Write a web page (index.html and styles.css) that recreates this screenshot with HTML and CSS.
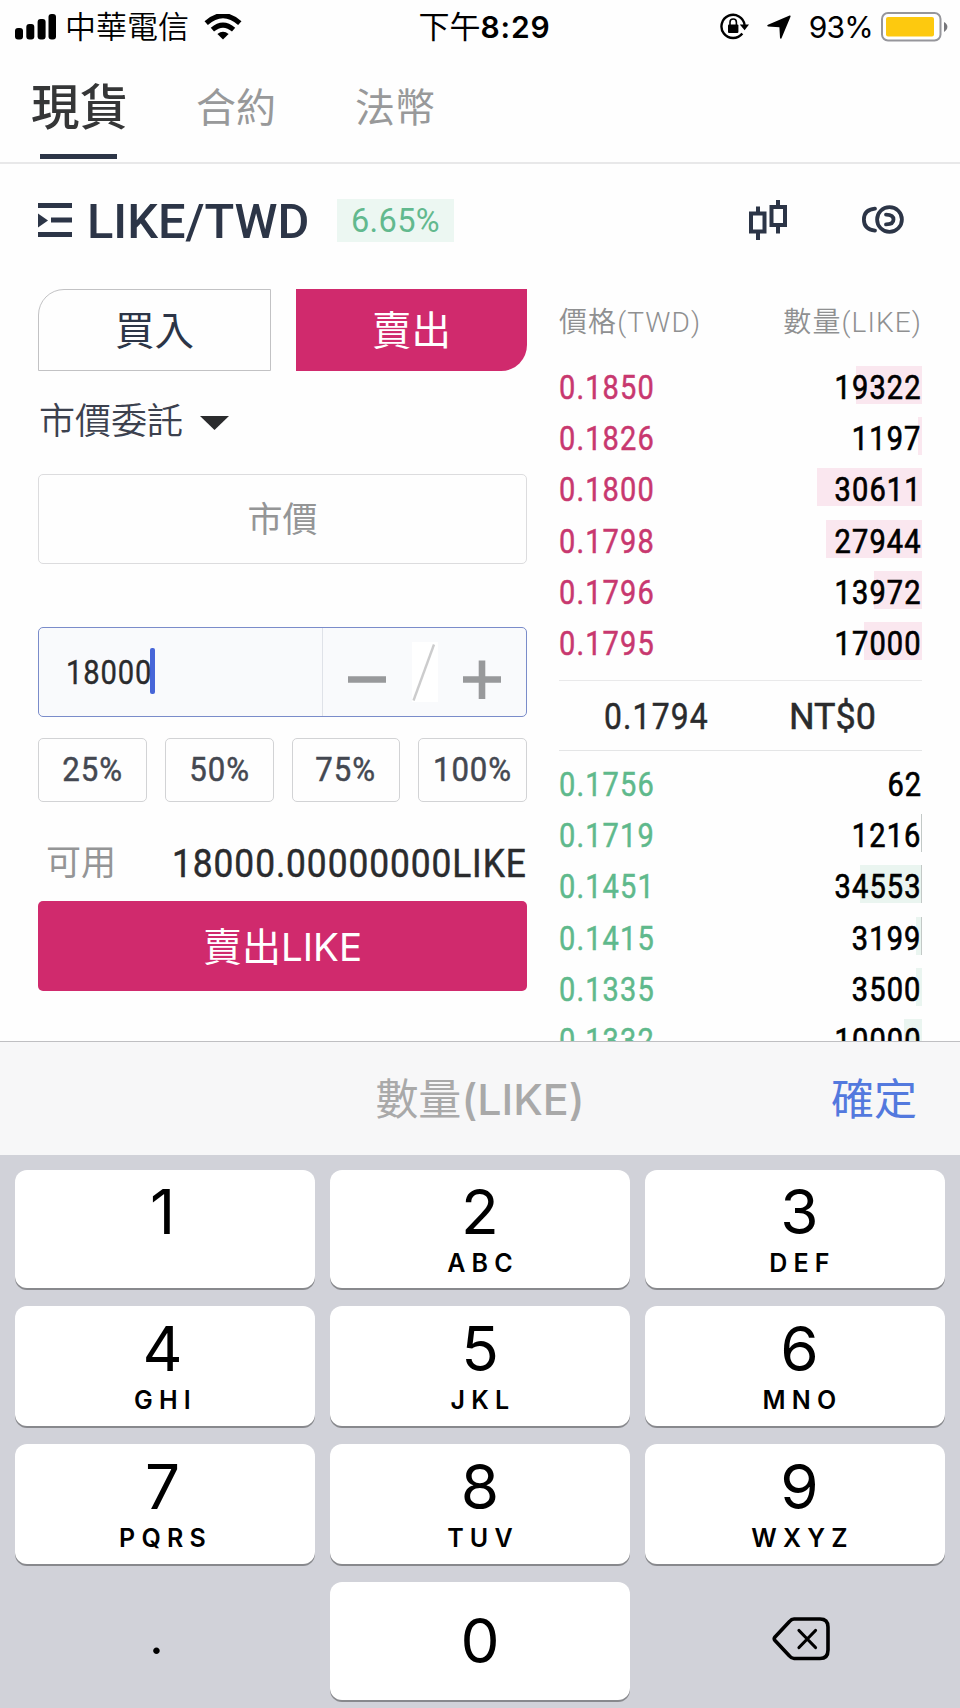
FILE: index.html
```
<!DOCTYPE html>
<html lang="zh-Hant">

<head>
    <meta charset="UTF-8">
    <meta name="viewport" content="width=device-width, initial-scale=1.0">
    <title>LIKE/TWD</title>
    <link rel="stylesheet" href="styles.css">
</head>

<body>
    <div class="app">
        <header class="status-bar">
            <div class="status-left">
                <svg class="signal" width="41" height="26" viewBox="0 0 41 26">
                    <rect x="0" y="14" width="8" height="11.5" rx="3" />
                    <rect x="11.3" y="10" width="8" height="15.5" rx="3" />
                    <rect x="22.6" y="5" width="8" height="20.5" rx="3" />
                    <rect x="33.5" y="0" width="7.5" height="25.5" rx="3" />
                </svg>
                <span class="carrier">中華電信</span>
                <svg class="wifi" width="38" height="26" viewBox="0 0 38 26">
                    <path d="M2.2 9.2 Q19 -6 35.8 9.2" fill="none" stroke="#000" stroke-width="5" />
                    <path d="M8.4 15.6 Q19 6.6 29.6 15.6" fill="none" stroke="#000" stroke-width="5" />
                    <path d="M13.4 20 Q19 15.6 24.6 20 L19 25.6 Z" />
                </svg>
            </div>
            <div class="clock">下午<b>8:29</b></div>
            <div class="status-right">
                <svg width="29" height="28" viewBox="0 0 29 28">
                    <path d="M22.3 20.5 A11.6 11.6 0 1 1 24.6 12" fill="none" stroke="#000" stroke-width="2.4" />
                    <path d="M19.8 11.5 H29 L24.6 17.2 Z" />
                    <rect x="8" y="11.5" width="10.4" height="8.5" rx="1" />
                    <path d="M10 12 V9.2 a3.2 3.2 0 0 1 6.4 0 V12" fill="none" stroke="#000" stroke-width="1.6" />
                </svg>
                <svg class="location" width="24" height="25" viewBox="0 0 24 25">
                    <path d="M22.6 0.6 Q24 0.2 23.4 2 L14.6 23 Q13.6 24.8 13 22.8 L12.4 12.2 L1 11.4 Q-0.6 10.8 1 9.8 Z" />
                </svg>
                <span class="battery-text">93%</span>
                <svg width="67" height="30" viewBox="0 0 67 30">
                    <rect x="1" y="1" width="58.5" height="27.5" rx="6" fill="#fff" stroke="#96969b" stroke-width="2" />
                    <rect x="5" y="5" width="48" height="19.5" rx="2" fill="#fdc90f" />
                    <path d="M63 10 Q66.4 12 66.4 14.8 Q66.4 17.8 63 20 Z" fill="#77777b" />
                </svg>
            </div>
        </header>

        <nav class="tabs">
            <span class="tab active">現貨</span>
            <span class="tab">合約</span>
            <span class="tab">法幣</span>
        </nav>

        <div class="pair-bar">
            <svg width="34" height="34" viewBox="0 0 34 34" fill="#2c3547">
                <rect x="0" y="0" width="34" height="5" />
                <rect x="13" y="14.5" width="21" height="5" />
                <rect x="0" y="29" width="34" height="5" />
                <path d="M0 10.5 L10 17.5 L0 24.5 Z" />
            </svg>
            <h1 class="pair-name"><span>LIKE/TWD</span></h1>
            <span class="change">6.65%</span>
            <div class="pair-tools">
                <svg width="38" height="40" viewBox="0 0 38 40" fill="none" stroke="#2c3547" stroke-width="4">
                    <rect x="2" y="13.5" width="13.5" height="18" />
                    <path d="M9 6.5 V13 M9 32 V40" />
                    <rect x="22.5" y="7" width="13.5" height="18" />
                    <path d="M29 0 V7 M29 26 V33.5" />
                </svg>
                <svg width="42" height="30" viewBox="0 0 42 30" fill="none" stroke="#2c3547" stroke-width="3.8" stroke-linecap="round">
                    <path d="M13 3.6 Q1.9 4.6 1.9 14.5 Q1.9 24.5 13 25.6" />
                    <circle cx="27.5" cy="14.5" r="12.4" />
                    <path d="M24 9.6 Q31.5 9.6 31.5 14.5 Q31.5 19.4 24 19.4" />
                </svg>
            </div>
        </div>

        <main class="trade">
            <section class="order-form">
                <div class="side-switch">
                    <div class="side buy">買入</div>
                    <div class="side sell">賣出</div>
                </div>
                <div class="order-type">
                    市價委託
                    <svg width="29" height="14" viewBox="0 0 29 14">
                        <path d="M0 0 H29 L14.5 14 Z" fill="#2a2b2d" />
                    </svg>
                </div>
                <div class="price-field">市價</div>
                <div class="amount-field">
                    <div class="amount-value"><span class="din">18000</span><i class="caret"></i></div>
                    <div class="stepper">
                        <svg width="154" height="60" viewBox="0 0 154 60">
                            <path d="M0 37.5 H38 M115 37.5 H153 M134 18.5 V57" stroke="#98999b" stroke-width="6.6" />
                            <rect x="64" y="0" width="26" height="60" fill="#fff" />
                            <path d="M65.5 58.5 L86 2.5" stroke="#cccccd" stroke-width="2.4" />
                        </svg>
                    </div>
                </div>
                <div class="percents">
                    <div class="percent"><span>25%</span></div>
                    <div class="percent"><span>50%</span></div>
                    <div class="percent"><span>75%</span></div>
                    <div class="percent"><span>100%</span></div>
                </div>
                <div class="available">
                    <span class="available-label">可用</span>
                    <span class="available-value">18000.00000000LIKE</span>
                </div>
                <div class="submit">賣出<span>LIKE</span></div>
            </section>

            <section class="book">
                <div class="book-head">
                    <span>價格(TWD)</span>
                    <span>數量(LIKE)</span>
                </div>
                <div class="asks">
                    <div class="row"><span class="price">0.1850</span><i class="depth" style="width: 66px"></i><span class="qty">19322</span></div>
                    <div class="row"><span class="price">0.1826</span><i class="depth" style="width: 4px"></i><span class="qty">1197</span></div>
                    <div class="row"><span class="price">0.1800</span><i class="depth" style="width: 105px"></i><span class="qty">30611</span></div>
                    <div class="row"><span class="price">0.1798</span><i class="depth" style="width: 96px"></i><span class="qty">27944</span></div>
                    <div class="row"><span class="price">0.1796</span><i class="depth" style="width: 48px"></i><span class="qty">13972</span></div>
                    <div class="row"><span class="price">0.1795</span><i class="depth" style="width: 58px"></i><span class="qty">17000</span></div>
                </div>
                <div class="last-price">
                    <span>0.1794</span>
                    <span>NT$0</span>
                </div>
                <div class="bids">
                    <div class="row"><span class="price">0.1756</span><i class="depth" style="width: 0px"></i><span class="qty">62</span></div>
                    <div class="row"><span class="price">0.1719</span><i class="depth edge" style="width: 1px"></i><span class="qty">1216</span></div>
                    <div class="row"><span class="price">0.1451</span><i class="depth edge" style="width: 62px"></i><span class="qty">34553</span></div>
                    <div class="row"><span class="price">0.1415</span><i class="depth edge" style="width: 6px"></i><span class="qty">3199</span></div>
                    <div class="row"><span class="price">0.1335</span><i class="depth" style="width: 6px"></i><span class="qty">3500</span></div>
                    <div class="row"><span class="price">0.1332</span><i class="depth" style="width: 18px"></i><span class="qty">10000</span></div>
                </div>
            </section>
        </main>
    </div>

    <div class="input-bar">
        <span></span>
        <span class="input-title">數量<b>(LIKE)</b></span>
        <span class="input-done">確定</span>
    </div>

    <div class="keypad">
        <div class="key left">1<small></small></div>
        <div class="key">2<small>ABC</small></div>
        <div class="key right">3<small>DEF</small></div>
        <div class="key left">4<small>GHI</small></div>
        <div class="key">5<small>JKL</small></div>
        <div class="key right">6<small>MNO</small></div>
        <div class="key left">7<small>PQRS</small></div>
        <div class="key">8<small>TUV</small></div>
        <div class="key right">9<small>WXYZ</small></div>
        <div class="key plain dot">.</div>
        <div class="key">0</div>
        <div class="key plain erase">
            <svg width="58" height="44" viewBox="0 0 58 44" fill="none" stroke="#000" stroke-width="3.6" stroke-linecap="round" stroke-linejoin="round">
                <path d="M22 2 H48 Q56 2 56 10 V33 Q56 41.5 48 41.5 H22 Q19.5 41.5 17.5 39 L3 23.5 Q1.5 21.8 3 20 L17.5 4.5 Q19.5 2 22 2 Z" />
                <path d="M27 13.5 L43.5 30.5 M43.5 13.5 L27 30.5" stroke-width="3.2" />
            </svg>
        </div>
    </div>
</body>

</html>
```
FILE: styles.css
```
* {
    margin: 0;
    padding: 0;
    box-sizing: border-box;
}

body {
    width: 960px;
    height: 1708px;
    overflow: hidden;
    background: #fefefe;
    font-family: Roboto, "Noto Sans CJK TC", sans-serif;
    color: #2c3547;
}

svg {
    display: block;
    flex-shrink: 0;
}

.app {
    height: 1041px;
    overflow: hidden;
}

/* status bar */
.status-bar {
    display: grid;
    grid-template-columns: 1fr auto 1fr;
    align-items: center;
    height: 52px;
    padding: 0 12px 0 15px;
    font-family: Inter, "Noto Sans CJK TC", sans-serif;
    font-size: 31px;
    line-height: 54px;
    color: #000;
}

.status-left,
.status-right {
    display: flex;
    align-items: center;
}

.carrier {
    margin: 0 15px 0 9px;
    font-weight: 350;
}

.clock {
    padding-left: 6px;
}

.clock b {
    font-size: 30px;
    font-weight: 600;
    letter-spacing: 0.8px;
}

.status-right {
    justify-content: flex-end;
}

.location {
    margin: 0 18px;
}

.battery-text {
    margin-right: 8px;
    font-size: 30px;
    letter-spacing: -0.8px;
}

/* tabs */
.tabs {
    display: flex;
    align-items: center;
    height: 112px;
    padding: 0 31px;
    border-bottom: 2px solid #e8e8e9;
}

.tab {
    margin-left: 79px;
    padding-top: 3px;
    font-size: 40px;
    line-height: 113px;
    color: #98999a;
}

.tab.active {
    position: relative;
    margin-left: 0;
    margin-right: -11px;
    font-size: 48.5px;
    font-weight: 500;
    color: #353637;
}

.tab.active::after {
    content: '';
    position: absolute;
    left: 9px;
    bottom: 6px;
    width: 77px;
    height: 5px;
    background: #2c3547;
}

/* pair header */
.pair-bar {
    display: flex;
    align-items: center;
    height: 111px;
    padding: 0 56px 0 38px;
}

.pair-name {
    width: 218px;
    margin-left: 15px;
    padding-top: 4px;
    font-size: 49px;
    font-weight: 500;
    line-height: 60px;
}

.pair-name span {
    display: inline-block;
    transform: scaleX(0.995);
    transform-origin: left;
}

.change {
    width: 117px;
    height: 43px;
    margin: 2px 0 0 32px;
    background: #ecf7f2;
    color: #62b98e;
    font-size: 32.5px;
    line-height: 44px;
    letter-spacing: 0.4px;
    text-align: center;
}

.pair-tools {
    display: flex;
    align-items: center;
    gap: 75px;
    margin-left: auto;
}

/* trade area */
.trade {
    display: grid;
    grid-template-columns: 489px 363px;
    gap: 32px;
    padding: 14px 38px 0;
}

.side-switch {
    display: grid;
    grid-template-columns: 233px 231px;
    justify-content: space-between;
}

.side {
    height: 82px;
    font-size: 39.5px;
    line-height: 85px;
    text-align: center;
}

.buy {
    border: 1px solid #c2c2c4;
    border-top-left-radius: 26px;
    line-height: 83px;
}

.sell {
    border-bottom-right-radius: 26px;
    background: #d02a6d;
    color: #fff;
}

.order-type {
    display: flex;
    align-items: center;
    gap: 17px;
    height: 103px;
    padding-left: 1px;
    font-size: 36px;
    font-weight: 350;
    line-height: 103px;
    color: #3c414e;
}

.price-field {
    height: 90px;
    border: 1px solid #dcdcde;
    border-radius: 5px;
    font-size: 35px;
    line-height: 92px;
    text-align: center;
    color: #949596;
}

.amount-field {
    display: grid;
    grid-template-columns: 1fr 204px;
    height: 90px;
    margin-top: 63px;
    border: 1.5px solid #7a8cca;
    border-radius: 5px;
    background: #f9fafc;
}

.amount-value {
    display: flex;
    align-items: center;
    padding-left: 27px;
    font-size: 33.5px;
    color: #2a2b2d;
}

.amount-value .din {
    width: 84px;
    letter-spacing: 1px;
    -webkit-text-stroke: 0.4px;
    transform: scaleX(0.87);
    transform-origin: left;
}

.caret {
    width: 5px;
    height: 46px;
    margin-top: -3px;
    border-radius: 2px;
    background: #4766d8;
}

.stepper {
    padding: 14px 0 0 25px;
    border-left: 1px solid #dfe2e8;
}

.percents {
    display: grid;
    grid-template-columns: repeat(4, 1fr);
    gap: 18px;
    margin-top: 21px;
}

.percent {
    height: 64px;
    border: 1.5px solid #d2d3d5;
    border-radius: 5px;
    font-size: 33.5px;
    line-height: 62px;
    text-align: center;
    color: #444851;
}

.percent span {
    display: inline-block;
    margin: 0 -10px;
    letter-spacing: 1px;
    -webkit-text-stroke: 0.5px;
    transform: scaleX(0.93);
}

.available {
    display: flex;
    align-items: center;
    justify-content: space-between;
    height: 99px;
    padding: 24px 1px 0 8px;
}

.available-label {
    font-size: 35px;
    line-height: 46px;
    color: #949596;
}

.available-value {
    margin-right: -1px;
    font-size: 38.5px;
    letter-spacing: 1px;
    color: #2a2b2d;
    -webkit-text-stroke: 0.5px;
    transform: scaleX(0.917);
    transform-origin: right;
}

.submit {
    height: 90px;
    border-radius: 5px;
    background: #d02a6d;
    color: #fff;
    font-size: 39px;
    line-height: 92px;
    text-align: center;
}

.submit span {
    font-family: Inter, sans-serif;
    font-size: 38.5px;
}

/* order book */
.book-head {
    display: flex;
    justify-content: space-between;
    height: 71px;
    font-size: 28px;
    font-weight: 350;
    line-height: 67px;
    letter-spacing: 1.1px;
    color: #8f9091;
}

.row {
    display: flex;
    justify-content: space-between;
    position: relative;
    height: 51.2px;
    font-size: 33.5px;
    line-height: 56px;
    letter-spacing: 1.3px;
}

.asks {
    height: 320px;
}

/* depth bar sits behind the quantity */
.depth {
    position: absolute;
    top: 6px;
    right: 0;
    height: 38px;
    background: #fae7ef;
}

.price,
.qty {
    position: relative;
    -webkit-text-stroke: 0.5px;
    transform: scaleX(0.865);
    transform-origin: left;
}

.price {
    color: #c8386f;
}

.qty {
    color: #000;
    -webkit-text-stroke: 0.7px;
    transform-origin: right;
}

.bids .price {
    color: #5fb98c;
}

.bids .depth {
    background: #eaf5f0;
}

.bids .edge {
    border-right: 1px solid #c3c9c7;
}

.last-price {
    display: flex;
    justify-content: space-between;
    height: 71px;
    margin-bottom: 6px;
    padding: 0 46px 0 45px;
    border-top: 1px solid #e9e9ea;
    border-bottom: 1.5px solid #e4e5e6;
    font-size: 36px;
    line-height: 73px;
    color: #2a2b2d;
    -webkit-text-stroke: 0.5px;
}

.last-price span:first-child {
    letter-spacing: 1.3px;
    transform: scaleX(0.885);
    transform-origin: left;
}

/* keyboard */
.input-bar {
    display: grid;
    grid-template-columns: 1fr auto 1fr;
    align-items: center;
    height: 114px;
    padding: 0 43px 5px;
    border-top: 1px solid #bfbfc2;
    background: #f7f7f8;
    font-family: Inter, "Noto Sans CJK TC", sans-serif;
}

.input-title {
    font-size: 43px;
    color: #a9a9a9;
}

.input-title b {
    font-size: 43px;
    font-weight: 500;
}

.input-done {
    font-size: 43px;
    text-align: right;
    color: #5379de;
}

.keypad {
    display: grid;
    grid-template-columns: repeat(3, 1fr);
    grid-template-rows: 118px 120px 120px 118px;
    gap: 18px 15px;
    height: 553px;
    padding: 15px 15px 0;
    background: #d1d2d9;
    font-family: Inter, sans-serif;
}

.key {
    display: flex;
    flex-direction: column;
    align-items: center;
    justify-content: center;
    border-radius: 12px;
    background: #fff;
    box-shadow: 0 2px 0 #88898d;
    font-size: 62px;
    line-height: 62px;
    color: #000;
}

.key.left {
    padding-right: 5px;
}

.key.right {
    padding-left: 9px;
}

.key small {
    height: 30px;
    margin-top: 5px;
    padding-left: 6px;
    font-size: 25px;
    font-weight: 600;
    line-height: 30px;
    letter-spacing: 6.2px;
}

.key.plain {
    background: none;
    box-shadow: none;
}

.key.dot {
    padding: 0 17px 11px 0;
    font-size: 50px;
}

.key.erase {
    padding: 0 0 4px 12px;
}
```
